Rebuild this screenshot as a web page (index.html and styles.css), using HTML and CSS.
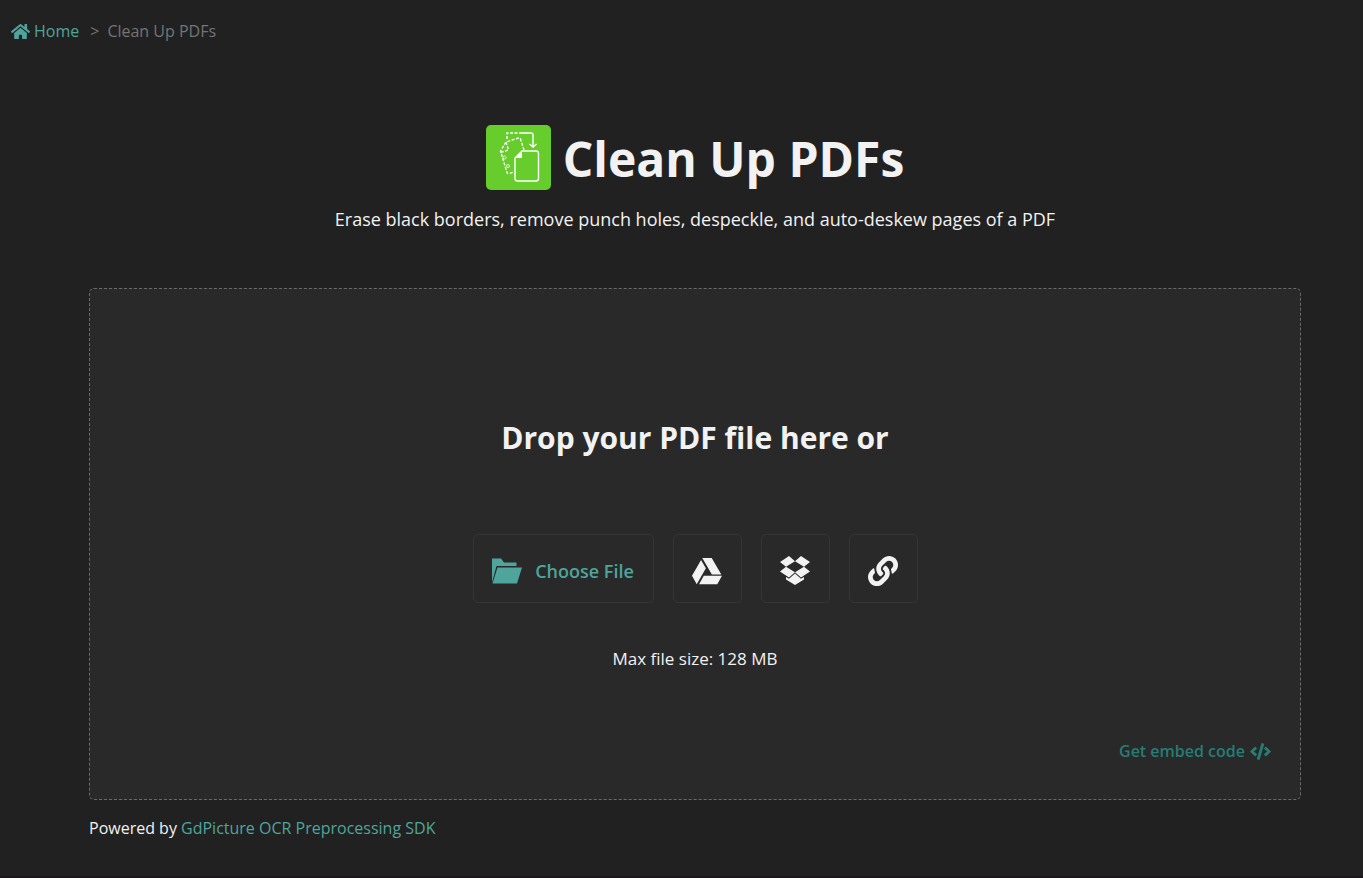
FILE: index.html
```html
<!DOCTYPE html>
<html lang="en">
<head>
    <meta charset="UTF-8">
    <meta name="viewport" content="width=device-width, initial-scale=1.0">
    <title>Clean Up PDFs</title>
    <link rel="stylesheet" href="styles.css">
</head>
<body>
    <nav class="breadcrumb">
        <a href="#">
            <svg class="icon-home" viewBox="0 0 576 512"><path d="M280.37 148.26L96 300.11V464a16 16 0 0 0 16 16l112.06-.29a16 16 0 0 0 15.92-16V368a16 16 0 0 1 16-16h64a16 16 0 0 1 16 16v95.64a16 16 0 0 0 16 16.05L464 480a16 16 0 0 0 16-16V300L295.67 148.26a12.19 12.19 0 0 0-15.3 0zM571.6 251.47L488 182.56V44.05a12 12 0 0 0-12-12h-56a12 12 0 0 0-12 12v72.61L318.47 43a48 48 0 0 0-61 0L4.34 251.47a12 12 0 0 0-1.6 16.9l25.5 31A12 12 0 0 0 45.15 301l235.22-193.74a12.19 12.19 0 0 1 15.3 0L530.9 301a12 12 0 0 0 16.9-1.6l25.5-31a12 12 0 0 0-1.7-16.93z"/></svg>
            Home
        </a>
        <span class="separator">&gt;</span>
        <span>Clean Up PDFs</span>
    </nav>

    <main class="container">
        <header class="header">
            <div class="title">
                <svg class="logo" viewBox="0 0 65 65">
                    <rect width="65" height="65" rx="5" fill="#67cd2c"/>
                    <g fill="none" stroke="#fff" stroke-width="1.4">
                        <path d="M21 14V8h14" stroke-dasharray="3 1.5"/>
                        <path d="M35 8h10q2 0 2 2v11M43.500 19l3.500 3 3.500-3"/>
                        <path d="M38 25L34.500 14Q34 12.500 32.500 13L20 17L14.500 26L21 47.500Q21.500 49 23 48.500L28 47" stroke-dasharray="3 1.500"/>
                        <path d="M20 17L22.500 25L14.500 27.500" stroke-dasharray="3 1.500"/>
                        <circle cx="18.500" cy="32.500" r="1.500" stroke-width=".8"/>
                        <circle cx="22" cy="41" r="1.500" stroke-width=".8"/>
                        <path d="M36 26h14q2.500 0 2.500 2.500v25q0 2.500-2.500 2.500H31.500q-2.500 0-2.500-2.500V33z"/>
                    </g>
                    <path d="M36 26v7h-7z" fill="#fff"/>
                </svg>
                <h1>Clean Up PDFs</h1>
            </div>
            <p>Erase black borders, remove punch holes, despeckle, and auto-deskew pages of a PDF</p>
        </header>

        <section class="drop-zone">
            <h2>Drop your PDF file here or</h2>
            <div class="sources">
                <button type="button" class="source choose-file">
                    <svg viewBox="0 0 30 25"><path d="M0 24V0h9l3 4h12.500v3.500H4.500L0 24zM5.500 9H30l-5 16H.500z"/></svg>
                    Choose File
                </button>
                <button type="button" class="source" aria-label="Google Drive">
                    <svg viewBox="0 0 512 512"><path d="M339 314.900L175.400 32h161.200l163.600 282.900H339zm-137.500 23.600L120.900 480h310.500L512 338.500H201.500zM154.100 67.400L0 338.500 80.600 480 237 208.800 154.100 67.400z"/></svg>
                </button>
                <button type="button" class="source" aria-label="Dropbox">
                    <svg viewBox="0 0 30 30"><path d="M9 0l6 5.200-9 5.600L0 6zM21 0l9 6-6 4.800-9-5.600zM6 10.800l9 5.500-6 5.200-9-5.900zM24 10.800l6 4.800-9 5.900-6-5.200zM15 17.600l6 5.100 3-1.800v2.700L15 29l-9-5.400v-2.700l3 1.800z"/></svg>
                </button>
                <button type="button" class="source" aria-label="Link">
                    <svg viewBox="0 0 512 512"><path d="M326.612 185.391c59.747 59.809 58.927 155.698.36 214.59-.11.12-.24.25-.36.37l-67.2 67.2c-59.27 59.27-155.699 59.262-214.96 0-59.27-59.26-59.27-155.7 0-214.96l37.106-37.106c9.84-9.84 26.786-3.3 27.294 10.606.648 17.722 3.826 35.527 9.69 52.721 1.986 5.822.567 12.262-3.783 16.612l-13.087 13.087c-28.026 28.026-28.905 73.66-1.155 101.96 28.024 28.579 74.086 28.749 102.325.51l67.2-67.19c28.191-28.191 28.073-73.757 0-101.83-3.701-3.694-7.429-6.564-10.341-8.569a16.037 16.037 0 0 1-6.947-12.606c-.396-10.567 3.348-21.456 11.698-29.806l21.054-21.055c5.521-5.521 14.182-6.199 20.584-1.731a152.482 152.482 0 0 1 20.522 17.197zM467.547 44.449c-59.261-59.262-155.69-59.27-214.96 0l-67.2 67.2c-.12.12-.25.25-.36.37-58.566 58.892-59.387 154.781.36 214.59a152.454 152.454 0 0 0 20.521 17.196c6.402 4.468 15.064 3.789 20.584-1.731l21.054-21.055c8.35-8.35 12.094-19.239 11.698-29.806a16.037 16.037 0 0 0-6.947-12.606c-2.912-2.005-6.64-4.875-10.341-8.569-28.073-28.073-28.191-73.639 0-101.83l67.2-67.19c28.239-28.239 74.3-28.069 102.325.51 27.75 28.3 26.872 73.934-1.155 101.96l-13.087 13.087c-4.35 4.35-5.769 10.79-3.783 16.612 5.864 17.194 9.042 34.999 9.69 52.721.509 13.906 17.454 20.446 27.294 10.606l37.106-37.106c59.271-59.259 59.271-155.699.001-214.959z"/></svg>
                </button>
            </div>
            <p class="max-size">Max file size: 128 MB</p>
            <a href="#" class="embed">
                Get embed code
                <svg viewBox="0 0 640 512"><path d="M278.9 511.5l-61-17.7c-6.4-1.8-10-8.5-8.2-14.900L346.200 8.700c1.800-6.400 8.500-10 14.900-8.200l61 17.700c6.400 1.800 10 8.500 8.200 14.900L293.800 503.300c-1.900 6.400-8.500 10.100-14.900 8.200zm-114-112.200l43.500-46.400c4.600-4.900 4.300-12.700-.8-17.200L117 256l90.600-79.700c5.100-4.500 5.500-12.300.8-17.200l-43.500-46.400c-4.500-4.800-12.100-5.100-17-.5L3.800 247.200c-5.100 4.700-5.100 12.800 0 17.500l144.100 135.100c4.900 4.600 12.500 4.400 17-.5zm327.200.6l144.100-135.100c5.100-4.700 5.100-12.800 0-17.500L492.100 112.100c-4.800-4.500-12.400-4.300-17 .5L431.600 159c-4.600 4.900-4.300 12.700.8 17.200L523 256l-90.600 79.700c-5.100 4.500-5.500 12.300-.8 17.200l43.500 46.400c4.500 4.900 12.100 5.100 17 .6z"/></svg>
            </a>
        </section>

        <p class="powered">Powered by <a href="#">GdPicture OCR Preprocessing SDK</a></p>
    </main>
</body>
</html>
```
FILE: styles.css
```css
* {
    box-sizing: border-box;
}
body {
    margin: 0;
    background-color: #212121;
    color: #f2f2f2;
    font-family: "Open Sans", "Noto Sans", sans-serif;
    font-size: 16px;
    line-height: 24px;
}
h1, h2, p {
    margin: 0;
}
a {
    color: #4fa59b;
    text-decoration: none;
}
svg {
    fill: currentColor;
    flex-shrink: 0;
}
.breadcrumb {
    display: flex;
    align-items: center;
    padding: 19px 11px;
    color: #757575;
}
.breadcrumb a {
    display: flex;
    align-items: center;
    gap: 4px;
}
.icon-home {
    width: 19px;
    height: 17px;
}
.separator {
    margin: 0 8px 0 11px;
}
.container {
    padding: 63px 62px 0 89px;
    border-bottom: 2px solid #1c191c;
}
.header {
    text-align: center;
}
.title {
    display: flex;
    justify-content: center;
    gap: 12px;
}
.logo {
    width: 65px;
    height: 65px;
}
.title h1 {
    font-size: 48px;
    line-height: 68px;
    font-weight: 700;
}
.header p {
    margin-top: 14px;
    font-size: 18px;
}
.drop-zone {
    display: flex;
    flex-direction: column;
    align-items: center;
    margin-top: 57px;
    padding: 129px 29px 36px;
    background-color: #292929;
    border: 1px dashed #6a6a6a;
    border-radius: 5px;
}
.drop-zone h2 {
    font-size: 30px;
    line-height: 40px;
}
.sources {
    display: flex;
    flex-wrap: wrap;
    justify-content: center;
    gap: 19px;
    margin-top: 76px;
}
.source {
    display: flex;
    align-items: center;
    justify-content: center;
    gap: 13px;
    width: 69px;
    height: 69px;
    padding: 4px 0 0;
    background: none;
    border: 1px solid #353535;
    border-radius: 5px;
    color: #f2f2f2;
    font-family: inherit;
    font-size: 18px;
    font-weight: 600;
    cursor: pointer;
}
.source svg {
    width: 30px;
    height: 30px;
}
.choose-file {
    width: 181px;
    color: #4fa59b;
}
.max-size {
    margin-top: 44px;
    font-size: 17px;
}
.embed {
    display: flex;
    align-items: center;
    align-self: flex-end;
    gap: 5px;
    margin-top: 68px;
    color: #267d74;
    font-weight: 600;
}
.embed svg {
    width: 21px;
    height: 17px;
}
.powered {
    padding: 16px 0 36px;
}
```
